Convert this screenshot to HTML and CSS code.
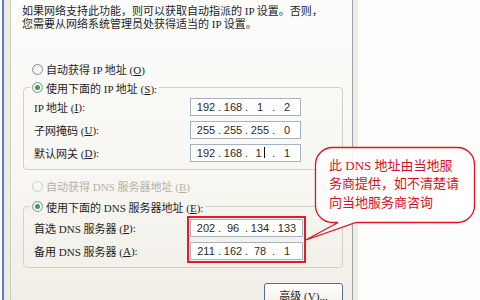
FILE: index.html
```html
<!DOCTYPE html>
<html lang="zh-CN">
<head>
<meta charset="utf-8">
<title>TCP/IP 属性</title>
<link rel="stylesheet" href="styles.css">
</head>
<body>
<div class="screen">
  <div class="window">
    <div class="page">
      <p class="intro">如果网络支持此功能，则可以获取自动指派的 IP 设置。否则，<br>您需要从网络系统管理员处获得适当的 IP 设置。</p>

      <div class="opt opt-first"><span class="radio"></span><span>自动获得 IP 地址 (<u>O</u>)</span></div>

      <fieldset class="group g1">
        <legend><span class="leg"><span class="radio on"></span><span>使用下面的 IP 地址 (<u>S</u>):</span></span></legend>
        <div class="rows">
          <div class="row"><span class="lbl">IP 地址 (<u>I</u>):</span>
            <div class="ip"><span class="seg">192</span><span class="dot">.</span><span class="seg">168</span><span class="dot">.</span><span class="seg">1</span><span class="dot">.</span><span class="seg">2</span></div>
          </div>
          <div class="row"><span class="lbl">子网掩码 (<u>U</u>):</span>
            <div class="ip"><span class="seg">255</span><span class="dot">.</span><span class="seg">255</span><span class="dot">.</span><span class="seg">255</span><span class="dot">.</span><span class="seg">0</span></div>
          </div>
          <div class="row"><span class="lbl">默认网关 (<u>D</u>):</span>
            <div class="ip"><span class="seg">192</span><span class="dot">.</span><span class="seg">168</span><span class="dot">.</span><span class="seg">1<i class="caret"></i></span><span class="dot">.</span><span class="seg">1</span></div>
          </div>
        </div>
      </fieldset>

      <div class="opt opt-dis"><span class="radio dis"></span><span>自动获得 DNS 服务器地址 (<u>B</u>)</span></div>

      <fieldset class="group g2">
        <legend><span class="leg"><span class="radio on"></span><span>使用下面的 DNS 服务器地址 (<u>E</u>):</span></span></legend>
        <div class="dns">
          <div class="dns-labels">
            <span class="lbl">首选 DNS 服务器 (<u>P</u>):</span>
            <span class="lbl">备用 DNS 服务器 (<u>A</u>):</span>
          </div>
          <div class="mark">
            <div class="ip wide"><span class="seg">202</span><span class="dot">.</span><span class="seg">96</span><span class="dot">.</span><span class="seg">134</span><span class="dot">.</span><span class="seg">133</span></div>
            <div class="ip wide"><span class="seg">211</span><span class="dot">.</span><span class="seg">162</span><span class="dot">.</span><span class="seg">78</span><span class="dot">.</span><span class="seg">1</span></div>
          </div>
        </div>
      </fieldset>

      <button class="btn" type="button">高级 (<u>V</u>)...</button>
    </div>
  </div>

  <div class="callout">
    <svg class="bubble" width="172" height="98" viewBox="0 0 172 98">
      <path d="M 27.5 2.5 H 152.5 A 17 17 0 0 1 169.5 19.5 V 60.5 A 17 17 0 0 1 152.5 77.5 H 51 L 0.8 95 L 33 77.5 H 27.5 A 17 17 0 0 1 10.5 60.5 V 19.5 A 17 17 0 0 1 27.5 2.5 Z" fill="rgba(255,255,255,0.9)" stroke="#e0141e" stroke-width="1.3"/>
    </svg>
    <div class="note">此 DNS 地址由当地服<br>务商提供，如不清楚请<br>向当地服务商咨询</div>
  </div>
</div>
</body>
</html>
```

FILE: styles.css
```css
* { box-sizing: border-box; }

html, body {
  margin: 0;
  padding: 0;
  background: #fdfdfd;
}

body {
  width: 480px;
  height: 300px;
  overflow: hidden;
  font-family: "Liberation Serif", "Noto Sans CJK SC", serif;
  font-size: 11px;
  color: #1e1e1e;
}

.screen {
  position: relative;
  width: 480px;
  height: 300px;
}

.window {
  width: 356px;
  height: 300px;
  margin-left: 2px;
  border-left: 2px solid #5a7ec4;
  background: #efece0;
  padding: 0 5px 0 6px;
}

.page {
  height: 300px;
  display: flex;
  flex-direction: column;
  background: linear-gradient(#fcfcfb 0%, #f8f7f3 55%, #f0eee6 100%);
  border-left: 1px solid #cfcdc0;
  border-right: 1px solid #9aa4b0;
  overflow: hidden;
}

.intro {
  margin: 0;
  padding: 5px 0 0 11px;
  line-height: 13px;
  white-space: nowrap;
  font-size: 11px;
}

.opt {
  display: flex;
  align-items: center;
  gap: 3px;
  height: 14px;
  padding-left: 21px;
}

.opt-first { margin-top: 31px; }
.opt-dis { margin-top: 9px; color: #b4b2a8; }

.radio {
  width: 11px;
  height: 11px;
  border-radius: 50%;
  border: 1px solid #7f93ab;
  background: radial-gradient(circle at 60% 60%, #ffffff 0%, #f2f1ec 60%, #dcdad0 100%);
  display: inline-flex;
  align-items: center;
  justify-content: center;
  flex: none;
}

.radio.on::after {
  content: "";
  width: 5px;
  height: 5px;
  border-radius: 50%;
  background: #35a835;
}

.radio.dis {
  border-color: #cfcdc4;
  background: #f7f6f2;
}

u { text-decoration: underline; text-underline-offset: 1px; }

.group {
  border: 1px solid #d4d1c3;
  border-radius: 4px;
  margin: 4px 9px 0 12px;
  padding: 0;
  min-width: 0;
}

.g2 { margin-top: 6px; }

.group legend {
  padding: 0 2px 0 1px;
  margin-left: 7px;
  height: 14px;
}

.leg {
  display: inline-flex;
  align-items: center;
  gap: 3px;
  height: 14px;
}

.rows {
  display: flex;
  flex-direction: column;
  gap: 5px;
  padding: 4px 0 7px 10px;
}

.row {
  display: flex;
  align-items: center;
  height: 18px;
}

.lbl {
  display: flex;
  align-items: center;
  height: 18px;
  width: 156px;
  flex: none;
  white-space: pre;
}

.ip {
  display: flex;
  align-items: center;
  width: 111px;
  height: 18px;
  padding-left: 4px;
  border: 1px solid #a3b3c3;
  background: #ffffff;
  font-family: "Liberation Sans", "Noto Sans CJK SC", sans-serif;
  font-size: 11px;
  color: #2a2a2a;
}

.ip.wide { width: 113px; }

.seg {
  width: 22px;
  text-align: center;
  flex: none;
}

.dot {
  width: 5px;
  text-align: center;
  flex: none;
}

.caret {
  display: inline-block;
  width: 1px;
  height: 11px;
  margin-left: 2px;
  background: #111;
  vertical-align: -1px;
}

.dns {
  display: flex;
  padding: 3px 0 4px 10px;
}

.dns-labels {
  display: flex;
  flex-direction: column;
  gap: 5px;
  padding-top: 3px;
  width: 153px;
  flex: none;
}

.mark {
  display: flex;
  flex-direction: column;
  gap: 5px;
  padding: 1px;
  border: 2px solid #e31d27;
}

.btn {
  margin: 15px 9px 0 auto;
  width: 79px;
  height: 23px;
  flex: none;
  border: 1px solid #55708f;
  border-radius: 3px;
  background: linear-gradient(#ffffff 0%, #f6f5f0 70%, #e4e1d5 100%);
  font: inherit;
  color: #1e1e1e;
  padding: 0;
}

.callout {
  position: absolute;
  left: 305px;
  top: 145px;
  width: 172px;
  height: 98px;
}

.bubble {
  position: absolute;
  left: 0;
  top: 0;
}

.note {
  position: relative;
  padding: 12px 0 0 24px;
  font-family: "Liberation Serif", "Noto Sans CJK SC", serif;
  font-size: 13px;
  line-height: 18.3px;
  color: #d2121c;
  white-space: nowrap;
}
```
